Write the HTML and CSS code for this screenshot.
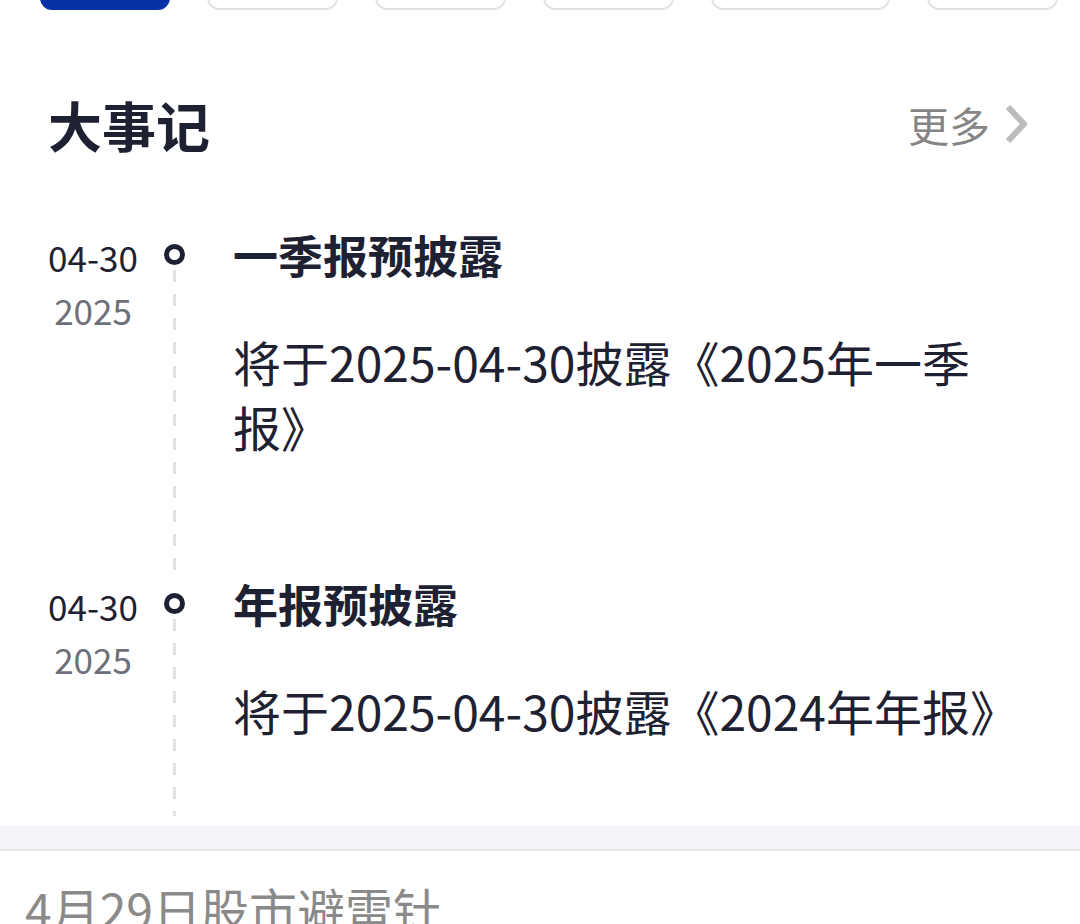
FILE: index.html
```html
<!DOCTYPE html>
<html>
<head>
  <meta charset="utf-8">
  <title>大事记</title>
  <link rel="stylesheet" href="styles.css">
</head>
<body>
  <div class="tabs">
    <div class="tab active"></div>
    <div class="tab"></div>
    <div class="tab"></div>
    <div class="tab"></div>
    <div class="tab wide"></div>
    <div class="tab"></div>
  </div>

  <div class="events">
    <div class="events-head">
      <h2>大事记</h2>
      <a class="more">更多
        <svg width="28" height="42" viewBox="0 0 28 42"><polyline points="6,4 22,21 6,38" fill="none" stroke="#bcbcbc" stroke-width="6" stroke-linejoin="round"/></svg>
      </a>
    </div>

    <div class="timeline">
      <div class="item">
        <div class="date">
          <div class="md">04-30</div>
          <div class="yr">2025</div>
        </div>
        <div class="axis"><span class="dot"></span><span class="rail"></span></div>
        <div class="body">
          <div class="title">一季报预披露</div>
          <div class="desc">将于2025-04-30披露《2025年一季报》</div>
        </div>
      </div>
      <div class="item last">
        <div class="date">
          <div class="md">04-30</div>
          <div class="yr">2025</div>
        </div>
        <div class="axis"><span class="dot"></span><span class="rail"></span></div>
        <div class="body">
          <div class="title">年报预披露</div>
          <div class="desc">将于2025-04-30披露《2024年年报》</div>
        </div>
      </div>
    </div>
  </div>

  <div class="split"></div>

  <div class="next">
    <h3>4月29日股市避雷针</h3>
  </div>
</body>
</html>
```

FILE: styles.css
```css
body {
  margin: 0;
  background: #fff;
  font-family: "Noto Sans CJK SC", "Noto Sans", sans-serif;
  color: #1e2131;
  overflow: hidden;
}

.tabs {
  display: flex;
  gap: 37px;
  padding: 0 22px 0 40px;
  margin-top: -40px;
}

.tab {
  width: 131px;
  height: 50px;
  box-sizing: border-box;
  border: 2px solid #e2e2e2;
  border-radius: 12px;
}

.tab.wide {
  width: 179px;
}

.tab.active {
  width: 130px;
  background: #0531a6;
  border-color: #0531a6;
}

.events {
  padding-top: 80px;
}

.events-head {
  display: flex;
  justify-content: space-between;
  align-items: center;
  height: 70px;
  padding: 0 50px 0 50px;
}

.events-head h2 {
  margin: 0;
  font-size: 54px;
  font-weight: 700;
  line-height: 70px;
  margin-left: -2px;
}

.more {
  display: flex;
  align-items: center;
  gap: 12px;
  font-size: 41px;
  color: #858585;
  margin-top: -2px;
}

.timeline {
  padding-top: 70px;
  padding-bottom: 10px;
}

.item {
  display: flex;
  padding-left: 40px;
  padding-bottom: 120px;
}

.item.last {
  padding-bottom: 73px;
}

.date {
  width: 106px;
  text-align: center;
  line-height: 53px;
  font-size: 35px;
}

.date .md {
  color: #1e2131;
}

.date .yr {
  color: #6d7078;
}

.axis {
  position: relative;
  width: 56px;
}

.dot {
  position: absolute;
  left: 18px;
  top: 14px;
  width: 21px;
  height: 21px;
  box-sizing: border-box;
  border: 5px solid #1e2131;
  border-radius: 50%;
  background: #fff;
}

.rail {
  position: absolute;
  left: 27px;
  top: 40px;
  bottom: -120px;
  width: 3px;
  background: repeating-linear-gradient(to bottom, #e2e2e2 0 12px, transparent 12px 24px);
}

.item.last .rail {
  bottom: -73px;
}

.body {
  margin-left: 31px;
  width: 800px;
}

.title {
  font-size: 45px;
  font-weight: 700;
  line-height: 50px;
}

.desc {
  margin-top: 49px;
  font-size: 48px;
  line-height: 65px;
}

.split {
  height: 23px;
  background: #f4f5f8;
  border-bottom: 2px solid #e4e5e8;
}

.next {
  padding: 22px 25px 0;
}

.next h3 {
  margin: 0;
  font-size: 48px;
  font-weight: 400;
  color: #8a8a8a;
  line-height: 70px;
}
```
